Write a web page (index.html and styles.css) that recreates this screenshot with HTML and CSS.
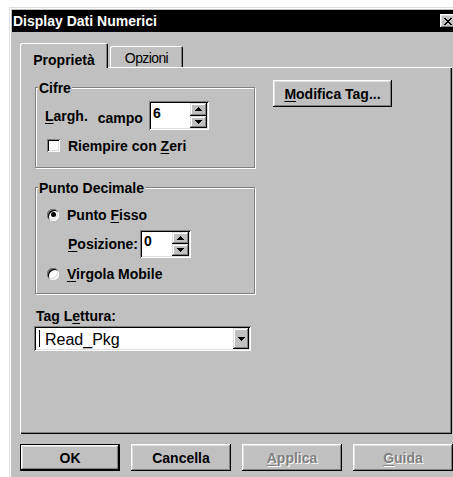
FILE: index.html
```html
<!DOCTYPE html>
<html lang="it">
<head>
<meta charset="utf-8">
<title>Display Dati Numerici</title>
<link rel="stylesheet" href="styles.css">
</head>
<body>
<div class="window">
  <div class="titlebar">
    <span class="title">Display Dati Numerici</span>
    <span class="close">
      <svg width="8" height="7" viewBox="0 0 8 7" shape-rendering="crispEdges"><path d="M0 0h2v1h-2zM6 0h2v1h-2zM1 1h2v1h-2zM5 1h2v1h-2zM2 2h4v1h-4zM3 3h2v1h-2zM2 4h4v1h-4zM1 5h2v1h-2zM5 5h2v1h-2zM0 6h2v1h-2zM6 6h2v1h-2z" fill="#000"/></svg>
    </span>
  </div>

  <div class="tabs">
    <div class="tab tab-active">Proprietà</div>
    <div class="tab tab-idle">Opzioni</div>
  </div>

  <div class="panel">
    <div class="col-left">
      <div class="group group-cifre">
        <div class="legend">Cifre</div>
        <div class="row row-width">
          <span class="width-label"><span class="lbl"><u>L</u>argh.</span><span class="lbl lbl-campo">campo</span></span>
          <div class="spinner spinner-wide">
            <div class="spin-value">6</div>
            <div class="spin-btns">
              <div class="spin-btn"><svg width="7" height="4" viewBox="0 0 7 4" shape-rendering="crispEdges"><path d="M3 0h1v1h-1zM2 1h3v1h-3zM1 2h5v1h-5zM0 3h7v1h-7z" fill="#000"/></svg></div>
              <div class="spin-btn"><svg width="7" height="4" viewBox="0 0 7 4" shape-rendering="crispEdges"><path d="M0 0h7v1h-7zM1 1h5v1h-5zM2 2h3v1h-3zM3 3h1v1h-1z" fill="#000"/></svg></div>
            </div>
          </div>
        </div>
        <div class="row row-check">
          <span class="checkbox"></span>
          <span class="lbl">Riempire con <u>Z</u>eri</span>
        </div>
      </div>

      <div class="group group-decimal">
        <div class="legend">Punto Decimale</div>
        <div class="row row-radio row-radio-first">
          <span class="radio radio-on"></span>
          <span class="lbl">Punto <u>F</u>isso</span>
        </div>
        <div class="row row-pos">
          <span class="pos-label"><u>P</u>osizione:</span>
          <div class="spinner spinner-narrow">
            <div class="spin-value spin-value-tight">0</div>
            <div class="spin-btns">
              <div class="spin-btn"><svg width="7" height="4" viewBox="0 0 7 4" shape-rendering="crispEdges"><path d="M3 0h1v1h-1zM2 1h3v1h-3zM1 2h5v1h-5zM0 3h7v1h-7z" fill="#000"/></svg></div>
              <div class="spin-btn"><svg width="7" height="4" viewBox="0 0 7 4" shape-rendering="crispEdges"><path d="M0 0h7v1h-7zM1 1h5v1h-5zM2 2h3v1h-3zM3 3h1v1h-1z" fill="#000"/></svg></div>
            </div>
          </div>
        </div>
        <div class="row row-radio row-radio-last">
          <span class="radio"></span>
          <span class="lbl"><u>V</u>irgola Mobile</span>
        </div>
      </div>

      <div class="tag-label">Tag L<u>e</u>ttura:</div>
      <div class="combo">
        <div class="combo-field">
          <span class="caret"></span>
          <span class="combo-text">Read_Pkg</span>
        </div>
        <div class="combo-btn"><svg width="7" height="4" viewBox="0 0 7 4" shape-rendering="crispEdges"><path d="M0 0h7v1h-7zM1 1h5v1h-5zM2 2h3v1h-3zM3 3h1v1h-1z" fill="#000"/></svg></div>
      </div>
    </div>

    <div class="col-right">
      <button class="btn btn-tag" type="button"><u>M</u>odifica Tag...</button>
    </div>
  </div>

  <div class="actions">
    <button class="btn btn-default" type="button">OK</button>
    <button class="btn" type="button">Cancella</button>
    <button class="btn btn-disabled" type="button" disabled><u>A</u>pplica</button>
    <button class="btn btn-disabled" type="button" disabled><u>G</u>uida</button>
  </div>
</div>
</body>
</html>
```

FILE: styles.css
```css
html, body {
  margin: 0;
  overflow: hidden;
}

body {
  width: 453px;
  height: 477px;
  background: #fff;
  font-family: "Liberation Sans", Arial, sans-serif;
  font-size: 14px;
  font-weight: bold;
  line-height: 16px;
  color: #000;
}

u {
  text-decoration: underline;
  text-underline-offset: 2px;
}

/* dialog frame */
.window {
  width: 447px;
  height: 470px;
  margin: 7px 0 0 9px;
  padding: 3px 0 0 3px;
  box-sizing: border-box;
  background: #c0c0c0;
  box-shadow: inset 1px 1px 0 #dfdfdf, inset 2px 2px 0 #fff;
}

.titlebar {
  height: 22px;
  background: #000;
  color: #fff;
  display: flex;
  align-items: center;
  justify-content: space-between;
  padding-left: 1px;
}

.close {
  width: 16px;
  height: 14px;
  background: #c0c0c0;
  display: flex;
  align-items: center;
  justify-content: center;
  box-shadow: inset -1px -1px 0 #000, inset 1px 1px 0 #fff, inset -2px -2px 0 #808080, inset 2px 2px 0 #dfdfdf;
}

/* tab strip */
.tabs {
  display: flex;
  align-items: flex-end;
  height: 25px;
  margin: 11px 0 -1px 8px;
  position: relative;
  z-index: 1;
}

.tab {
  box-sizing: border-box;
  background: #c0c0c0;
  text-align: center;
  border-radius: 2px 2px 0 0;
  box-shadow: inset 1px 1px 0 #fff, inset -1px 0 0 #000, inset -2px 0 0 #808080;
}

.tab-active {
  width: 88px;
  height: 25px;
  padding-top: 9px;
}

.tab-idle {
  width: 73px;
  height: 21px;
  margin-left: 2px;
  margin-bottom: 1px;
  padding-top: 4px;
  font-family: "Liberation Sans Narrow", "Liberation Sans", sans-serif;
  font-weight: normal;
  letter-spacing: -0.6px;
}

/* property page */
.panel {
  width: 432px;
  height: 367px;
  margin-left: 8px;
  box-sizing: border-box;
  padding: 13px 0 0 15px;
  display: flex;
  box-shadow: inset 1px 1px 0 #fff, inset -1px -1px 0 #000, inset -2px -2px 0 #808080;
}

.col-left {
  width: 220px;
  margin-top: 7px;
  display: flex;
  flex-direction: column;
}

.col-right {
  margin-left: 18px;
}

.group {
  border: 1px solid #808080;
  box-shadow: 1px 1px 0 #fff, inset 1px 1px 0 #fff;
  display: flex;
  flex-direction: column;
}

.legend {
  align-self: flex-start;
  margin: -8px 0 0 2px;
  padding: 0 1px;
  background: #c0c0c0;
}

.row {
  display: flex;
  align-items: center;
}

.row-width {
  height: 29px;
  margin-top: 5px;
  padding-left: 9px;
}

.width-label {
  width: 104px;
  display: flex;
}

.lbl-campo {
  margin-left: 10px;
  position: relative;
  top: 2px;
}

.row-check {
  height: 13px;
  margin-top: 9px;
  padding-left: 11px;
  margin-bottom: 15px;
}

.row-check .lbl,
.row-radio .lbl {
  margin-left: 8px;
}

.group-decimal {
  margin-top: 19px;
}

.row-radio {
  height: 13px;
  padding-left: 11px;
}

.row-radio-first {
  margin-top: 12px;
}

.row-radio-last {
  margin-top: 9px;
  margin-bottom: 13px;
}

.row-pos {
  height: 28px;
  margin-top: 9px;
  padding-left: 32px;
}

.pos-label {
  width: 72px;
}

/* sunken controls */
.checkbox {
  width: 13px;
  height: 13px;
  background: #fff;
  box-shadow: inset 1px 1px 0 #808080, inset -1px -1px 0 #fff, inset 2px 2px 0 #000, inset -2px -2px 0 #dfdfdf;
}

.radio {
  width: 12px;
  height: 12px;
  border-radius: 50%;
  background: #fff;
  display: flex;
  align-items: center;
  justify-content: center;
  box-shadow: inset 1px 1px 0 #808080, inset -1px -1px 0 #fff, inset 2px 2px 0 #000, inset -2px -2px 0 #dfdfdf;
}

.radio-on::after {
  content: "";
  width: 5px;
  height: 5px;
  border-radius: 50%;
  background: #000;
}

.spinner {
  box-sizing: border-box;
  padding: 2px;
  display: flex;
  background: #fff;
  box-shadow: inset 1px 1px 0 #808080, inset -1px -1px 0 #fff, inset 2px 2px 0 #000, inset -2px -2px 0 #dfdfdf;
}

.spinner-wide {
  width: 60px;
  height: 29px;
}

.spinner-narrow {
  width: 51px;
  height: 28px;
}

.spin-value {
  flex: 1;
  padding: 2px 0 0 2px;
}

.spin-value-tight {
  padding-top: 1px;
}

.spin-btns {
  width: 17px;
  display: flex;
  flex-direction: column;
}

.spin-btn {
  flex: 1;
  background: #c0c0c0;
  display: flex;
  align-items: center;
  justify-content: center;
  box-shadow: inset -1px -1px 0 #000, inset 1px 1px 0 #dfdfdf, inset -2px -2px 0 #808080, inset 2px 2px 0 #fff;
}

.tag-label {
  margin: 14px 0 0 1px;
}

.combo {
  width: 217px;
  height: 25px;
  margin: 2px 0 0 -1px;
  box-sizing: border-box;
  padding: 2px;
  display: flex;
  background: #fff;
  box-shadow: inset 1px 1px 0 #808080, inset -1px -1px 0 #fff, inset 2px 2px 0 #000, inset -2px -2px 0 #dfdfdf;
}

.combo-field {
  flex: 1;
  display: flex;
  align-items: center;
  padding-top: 2px;
}

.caret {
  width: 1px;
  height: 17px;
  margin: -2px 0 0 3px;
  background: #000;
}

.combo-text {
  margin-left: 5px;
  font-weight: normal;
  font-size: 16px;
  line-height: 18px;
}

.combo-btn {
  width: 16px;
  background: #c0c0c0;
  display: flex;
  align-items: center;
  justify-content: center;
  box-shadow: inset -1px -1px 0 #000, inset 1px 1px 0 #dfdfdf, inset -2px -2px 0 #808080, inset 2px 2px 0 #fff;
}

/* push buttons */
.btn {
  box-sizing: border-box;
  height: 27px;
  padding: 0;
  border: 0;
  background: #c0c0c0;
  font: inherit;
  color: #000;
  text-align: center;
  box-shadow: inset -1px -1px 0 #000, inset 1px 1px 0 #fff, inset -2px -2px 0 #808080, inset 2px 2px 0 #dfdfdf;
}

.btn-tag {
  width: 119px;
}

.actions {
  display: flex;
  gap: 11px;
  margin: 10px 0 0 8px;
}

.actions .btn {
  width: 100px;
  flex: none;
}

.btn-default {
  box-shadow: inset 0 0 0 1px #000, inset -2px -2px 0 #000, inset 2px 2px 0 #fff, inset -3px -3px 0 #808080, inset 3px 3px 0 #dfdfdf;
}

.btn-disabled {
  color: #808080;
  text-shadow: 1px 1px 0 #fff;
}
```
